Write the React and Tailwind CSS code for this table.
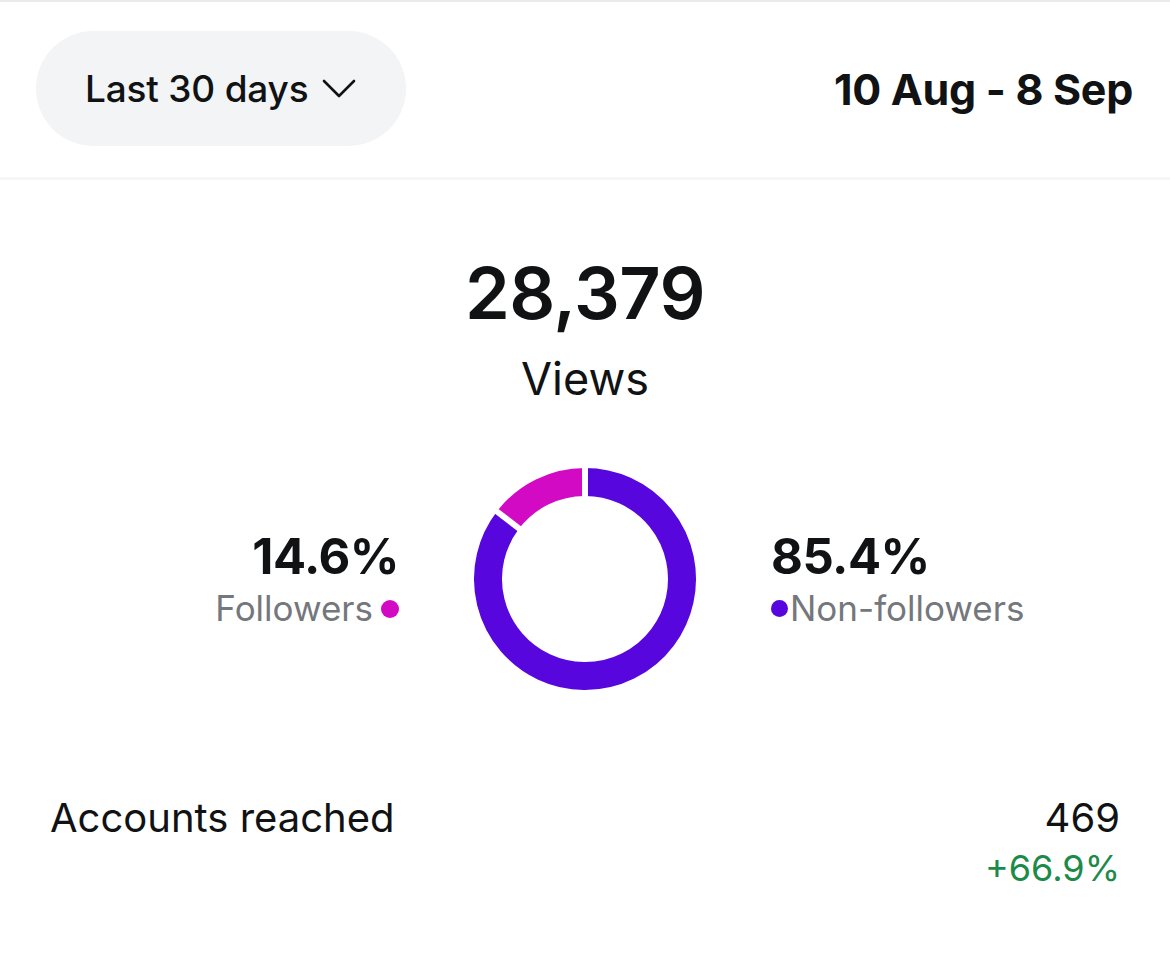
const FOLLOWERS = 14.6

function Donut() {
  const cx = 112
  const cy = 112
  const r = 97
  const point = (deg, rad = r) => {
    const a = (deg * Math.PI) / 180
    return [cx + rad * Math.cos(a), cy + rad * Math.sin(a)]
  }
  const split = -90 - (FOLLOWERS / 100) * 360
  const [sx, sy] = point(split)
  const [tx, ty] = point(-90)
  const sep = (deg) => [...point(deg, 78), ...point(deg, 116)]
  const s1 = sep(-90)
  const s2 = sep(split)
  return (
    <svg width="224" height="224" viewBox="0 0 224 224">
      <path d={`M ${tx} ${ty} A ${r} ${r} 0 1 1 ${sx} ${sy}`} fill="none" stroke="#5706dd" strokeWidth="28" />
      <path d={`M ${sx} ${sy} A ${r} ${r} 0 0 1 ${tx} ${ty}`} fill="none" stroke="#d20ac4" strokeWidth="28" />
      <line x1={s1[0]} y1={s1[1]} x2={s1[2]} y2={s1[3]} stroke="#fff" strokeWidth="6" />
      <line x1={s2[0]} y1={s2[1]} x2={s2[2]} y2={s2[3]} stroke="#fff" strokeWidth="6" />
    </svg>
  )
}

function Chevron() {
  return (
    <svg width="34" height="20" viewBox="0 0 34 20" fill="none" stroke="currentColor" strokeWidth="2.6" strokeLinecap="round" strokeLinejoin="round">
      <polyline points="2,2 17,17 32,2" />
    </svg>
  )
}

export default function App() {
  return (
    <div className="min-h-screen w-[1170px] bg-white text-[#101214] font-['Inter',sans-serif]">
      <div className="h-[2px] bg-[#e9eaec]" />
      <div className="flex h-[175px] items-start justify-between pl-[36px] pr-[37px] pt-[29px]">
        <button className="flex h-[115px] w-[370px] items-center gap-[14px] rounded-full bg-[#f2f4f5] pl-[49px] text-[37px] font-medium tracking-[-0.2px]">
          Last 30 days
          <Chevron />
        </button>
        <div className="pt-[37px] text-[43px] font-bold leading-none tracking-[-0.3px]">10 Aug - 8 Sep</div>
      </div>
      <div className="h-[3px] bg-[#f6f6f7]" />

      <div className="flex flex-col items-center pt-[77px]">
        <div className="text-[72px] font-semibold leading-none tracking-[-0.5px]">28,379</div>
        <div className="mt-[27px] text-[45px] leading-none">Views</div>
      </div>

      <div className="mt-[66px] grid grid-cols-[1fr_auto_1fr] items-center gap-x-[74px]">
        <div className="flex flex-col items-end">
          <div className="text-[49px] font-bold leading-none tracking-[-0.5px]">14.6%</div>
          <div className="mt-[10px] flex items-center gap-[8px] text-[35px] leading-none text-[#74777c]">
            Followers
            <span className="h-[18px] w-[18px] rounded-full bg-[#d20ac4]" />
          </div>
        </div>
        <Donut />
        <div className="flex flex-col items-start">
          <div className="text-[49px] font-bold leading-none tracking-[-0.5px]">85.4%</div>
          <div className="mt-[10px] flex items-center gap-[2px] text-[35px] leading-none text-[#74777c]">
            <span className="h-[17px] w-[17px] rounded-full bg-[#5706dd]" />
            Non-followers
          </div>
        </div>
      </div>

      <div className="mt-[107px] flex items-start justify-between pl-[50px] pr-[50px]">
        <div className="text-[40px] leading-none">Accounts reached</div>
        <div className="flex flex-col items-end">
          <div className="text-[40px] leading-none">469</div>
          <div className="mt-[12px] text-[36px] leading-none text-[#1c8a48]">+66.9%</div>
        </div>
      </div>
    </div>
  )
}
